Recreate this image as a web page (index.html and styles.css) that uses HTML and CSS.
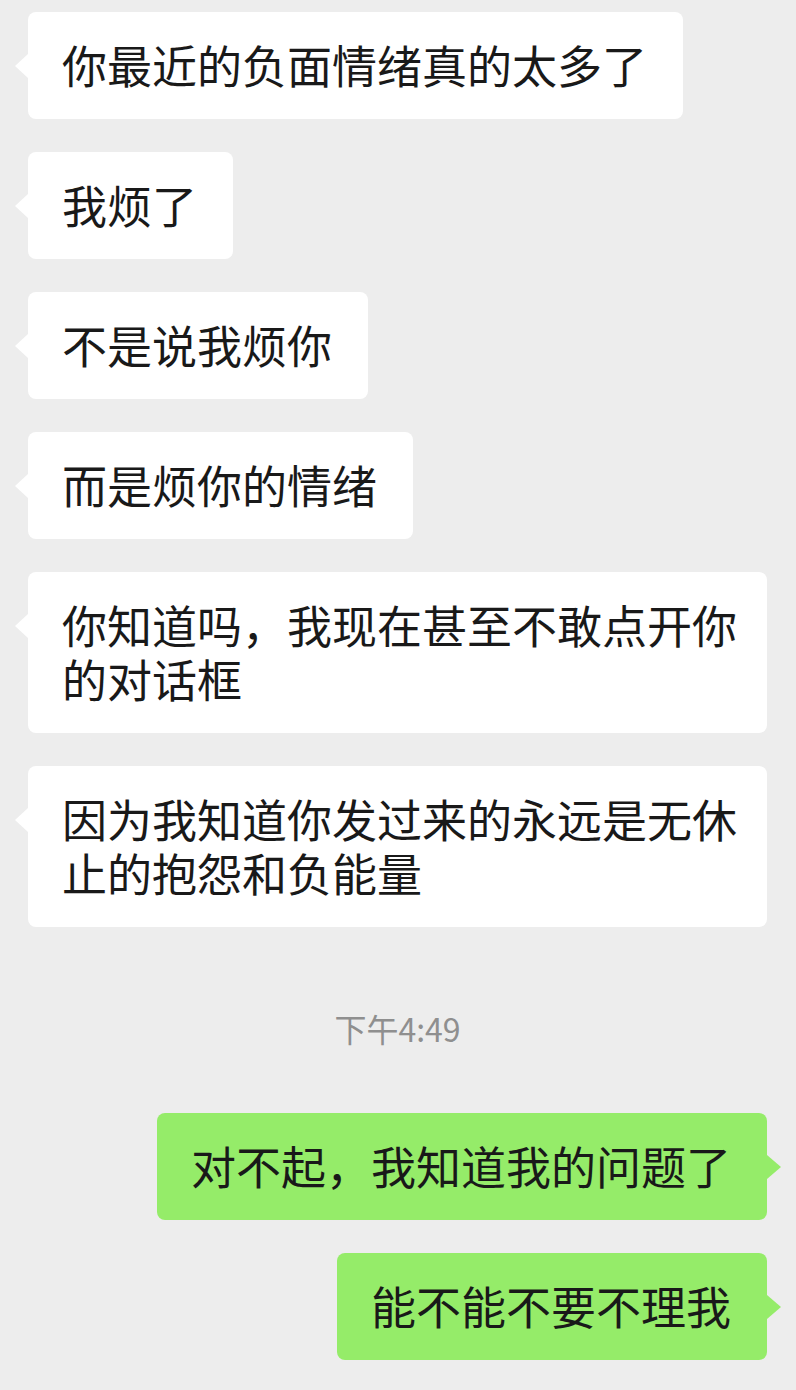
FILE: index.html
```html
<!DOCTYPE html>
<html lang="zh-CN">
<head>
  <meta charset="UTF-8">
  <title>聊天记录</title>
  <link rel="stylesheet" href="styles.css">
</head>
<body>
  <div class="chat">
    <!-- Incoming messages -->
    <div class="row left"><div class="bubble">你最近的负面情绪真的太多了</div></div>
    <div class="row left"><div class="bubble">我烦了</div></div>
    <div class="row left"><div class="bubble">不是说我烦你</div></div>
    <div class="row left"><div class="bubble">而是烦你的情绪</div></div>
    <div class="row left"><div class="bubble wide">你知道吗，我现在甚至不敢点开你的对话框</div></div>
    <div class="row left"><div class="bubble wide">因为我知道你发过来的永远是无休止的抱怨和负能量</div></div>

    <div class="time">下午4:49</div>

    <!-- Outgoing messages -->
    <div class="row right"><div class="bubble">对不起，我知道我的问题了</div></div>
    <div class="row right"><div class="bubble">能不能不要不理我</div></div>
  </div>
</body>
</html>
```

FILE: styles.css
```css
* {
  box-sizing: border-box;
  margin: 0;
  padding: 0;
}

body {
  background-color: #ededed;
  font-family: "Noto Sans CJK SC", "Noto Sans", sans-serif;
  color: #191919;
}

.chat {
  display: flex;
  flex-direction: column;
  gap: 33px;
  padding: 12px 29px 30px 28px;
}

.row {
  display: flex;
}

.row.left {
  justify-content: flex-start;
}

.row.right {
  justify-content: flex-end;
}

.bubble {
  position: relative;
  max-width: 742px;
  padding: 26px 36px 27px 34px;
  font-size: 45px;
  line-height: 54px;
  border-radius: 8px;
  background-color: #fff;
}

.bubble.wide {
  padding-right: 28px;
}

.left .bubble::before {
  content: "";
  position: absolute;
  left: -13px;
  top: 42px;
  border-top: 12px solid transparent;
  border-bottom: 12px solid transparent;
  border-right: 13px solid #fff;
}

.right .bubble {
  background-color: #95ec69;
}

.right .bubble::after {
  content: "";
  position: absolute;
  right: -14px;
  top: 42px;
  border-top: 12px solid transparent;
  border-bottom: 12px solid transparent;
  border-left: 14px solid #95ec69;
}

.time {
  text-align: center;
  font-size: 32px;
  line-height: 40px;
  color: #8f8f8f;
  margin: 48px 0 32px;
}
```
